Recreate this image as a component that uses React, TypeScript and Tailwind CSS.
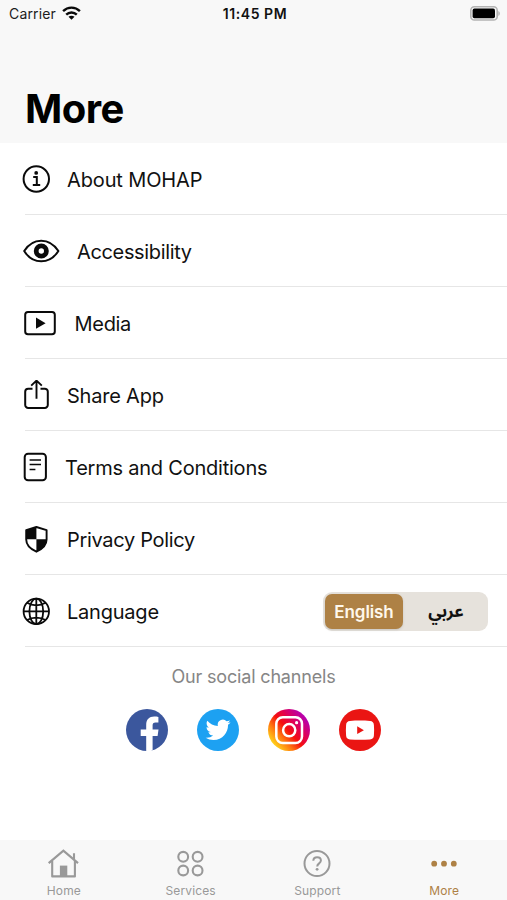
import type { ReactNode } from 'react'

interface MenuItem {
  label: string
  icon: ReactNode
  labelClass: string
}

const menuItems: MenuItem[] = [
  {
    label: 'About MOHAP',
    labelClass: 'ml-[17px] tracking-[-0.13px]',
    icon: (
      <svg width="28" height="30" viewBox="0 0 28 30" fill="none" stroke="#0a0a0a">
        <circle cx="14.3" cy="15" r="12.7" strokeWidth="2" />
        <path d="M11.200 13.1h3.6v7.7M10.800 21h7.400" strokeWidth="2" />
        <circle cx="14.200" cy="8.900" r="1.900" fill="#0a0a0a" stroke="none" />
      </svg>
    ),
  },
  {
    label: 'Accessibility',
    labelClass: 'ml-[17px] tracking-[-0.35px]',
    icon: (
      <svg width="38" height="30" viewBox="0 0 38 30" fill="none" stroke="#0a0a0a">
        <path
          d="M2.200 15C6 9 12 4.700 19.200 4.700S32.500 9 36.400 15C32.500 21.100 26.500 25.300 19.200 25.300S6 21.100 2.200 15Z"
          strokeWidth="2"
          strokeLinejoin="round"
        />
        <circle cx="19.300" cy="15" r="5.100" strokeWidth="4.800" />
      </svg>
    ),
  },
  {
    label: 'Media',
    labelClass: 'ml-[18.5px] tracking-[-0.3px]',
    icon: (
      <svg width="34" height="30" viewBox="0 0 34 30" fill="none" stroke="#0a0a0a">
        <rect x="3.200" y="3.900" width="29.600" height="22.400" rx="2.800" strokeWidth="2" />
        <path d="M14 9.600v11.200l9.600-5.600Z" fill="#0a0a0a" stroke="none" />
      </svg>
    ),
  },
  {
    label: 'Share App',
    labelClass: 'ml-[17px] tracking-[-0.22px]',
    icon: (
      <svg width="28" height="30" viewBox="0 0 28 30" fill="none" stroke="#0a0a0a">
        <path d="M10.500 8.700H6.200a3 3 0 0 0-3 3v13.200a3 3 0 0 0 3 3h16.600a3 3 0 0 0 3-3V11.700a3 3 0 0 0-3-3h-4.300" strokeWidth="2" />
        <path d="M14.500 18.800V1M9.200 5.600l5.300-5 5.300 5" strokeWidth="1.900" />
      </svg>
    ),
  },
  {
    label: 'Terms and Conditions',
    labelClass: 'ml-[17px] tracking-[-0.22px]',
    icon: (
      <svg width="26" height="30" viewBox="0 0 26 30" fill="none" stroke="#0a0a0a">
        <rect x="2.700" y="1.700" width="21.200" height="26.600" rx="3.400" strokeWidth="2" />
        <path d="M7.600 8h11.400M7.600 12.400h11.400M7.600 17.600h5.800" strokeWidth="1.500" />
      </svg>
    ),
  },
  {
    label: 'Privacy Policy',
    labelClass: 'ml-[17px] tracking-[-0.32px]',
    icon: (
      <svg width="28" height="30" viewBox="0 0 28 30" fill="none">
        <path
          d="M14.400 3 24.600 6.200v9.300c0 5.600-4.200 9.500-10.200 12.200C8.400 25 4.200 21.100 4.200 15.500V6.200Z"
          stroke="#0a0a0a"
          strokeWidth="1.900"
          strokeLinejoin="round"
        />
        <path d="M14.400 3v12.200H4.200v-9ZM14.400 15.200h10.200c0 5.900-4.200 9.800-10.200 12.500Z" fill="#0a0a0a" />
      </svg>
    ),
  },
  {
    label: 'Language',
    labelClass: 'ml-[17px] tracking-[-0.22px]',
    icon: (
      <svg width="28" height="30" viewBox="0 0 28 30" fill="none" stroke="#0a0a0a" strokeWidth="1.800">
        <circle cx="14.300" cy="15.400" r="12.700" />
        <ellipse cx="14.300" cy="15.400" rx="6.900" ry="12.700" />
        <path d="M14.300 2.700v25.400M1.600 15.400H27M5 6.800c5.600 3.300 13 3.300 18.600 0M5 24c5.600-3.300 13-3.300 18.600 0" />
      </svg>
    ),
  },
]

const tabs = [
  {
    label: 'Home',
    icon: (
      <svg width="34" height="32" viewBox="0 0 34 32" fill="none" stroke="currentColor">
        <path d="M2.700 15.200 17.400 2.700l14.600 12.500" strokeWidth="2.200" />
        <path d="M6.200 13v15.400h22.700V13M28 11V5.300" strokeWidth="2.100" strokeLinejoin="round" />
        <path d="M13.900 17.600h7.400v10.800h-7.400z" fill="currentColor" stroke="none" />
      </svg>
    ),
  },
  {
    label: 'Services',
    icon: (
      <svg width="34" height="32" viewBox="0 0 34 32" fill="none" stroke="currentColor" strokeWidth="2.100">
        <circle cx="10.200" cy="8.800" r="4.900" />
        <circle cx="24.600" cy="8.800" r="4.900" />
        <circle cx="10.200" cy="22.500" r="4.900" />
        <circle cx="24.600" cy="22.500" r="4.900" />
      </svg>
    ),
  },
  {
    label: 'Support',
    icon: (
      <svg width="34" height="32" viewBox="0 0 34 32" fill="none" stroke="currentColor">
        <circle cx="17" cy="15.500" r="12.500" strokeWidth="2" />
        <path d="M13.300 12.800c.1-2.200 1.600-3.500 3.800-3.500s3.800 1.300 3.800 3.300c0 2.800-3.700 2.700-3.700 5.800" strokeWidth="2" />
        <circle cx="17.100" cy="21.300" r="1.400" fill="currentColor" stroke="none" />
      </svg>
    ),
  },
  {
    label: 'More',
    active: true,
    icon: (
      <svg width="34" height="32" viewBox="0 0 34 32" fill="currentColor">
        <circle cx="7.200" cy="15.700" r="2.900" />
        <circle cx="17" cy="15.700" r="2.900" />
        <circle cx="26.800" cy="15.700" r="2.900" />
      </svg>
    ),
  },
]

function StatusBar() {
  return (
    <div className="flex h-7 items-center pl-[9px] pr-[6px] text-[14px] text-[#1c1c1c]">
      <div className="flex flex-1 items-center gap-[6px] pb-[2px]">
        <span className="tracking-[0.15px]">Carrier</span>
        <svg width="19" height="14" viewBox="0 0 19 14" fill="none" stroke="#0a0a0a" strokeWidth="2.400">
          <path d="M1.100 5.100c4.700-4.600 12.100-4.600 16.800 0M4.200 8.600c3-2.900 7.600-2.900 10.600 0" />
          <path d="M9.500 13.800 6.500 10.800c1.700-1.500 4.300-1.500 6 0Z" fill="#0a0a0a" stroke="none" />
        </svg>
      </div>
      <span className="pb-[2px] font-semibold tracking-[0.55px] text-[#111111]">11:45 PM</span>
      <div className="flex flex-1 justify-end pb-[2px]">
        <svg width="31" height="15" viewBox="0 0 31 15">
          <rect x=".800" y=".800" width="26.400" height="13.200" rx="3.600" fill="#f8f8f8" stroke="#b3b3b3" strokeWidth="1.600" />
          <rect x="2.600" y="2.600" width="22.400" height="9.600" rx="1.800" fill="#000" />
          <path d="M28.300 5v5c2-.8 2-4.200 0-5Z" fill="#b3b3b3" />
        </svg>
      </div>
    </div>
  )
}

function LanguageSwitch() {
  return (
    <div className="ml-auto mr-[19px] flex h-[39px] w-[165px] rounded-[9px] bg-[#e6e2dc] p-[2px] text-[17px] font-semibold">
      <button className="h-[35px] w-[78px] rounded-[7px] bg-[#ae8145] pt-[3px] tracking-[-0.1px] text-[#fff8ec] shadow-sm">
        English
      </button>
      <button
        className="h-[35px] flex-1 pl-[3px] pt-[4px] font-bold text-[#111111]"
        style={{ fontFamily: '"Noto Sans Arabic", "DejaVu Sans", sans-serif' }}
      >
        عربي
      </button>
    </div>
  )
}

function SocialChannels() {
  return (
    <section className="flex flex-col items-center">
      <h2 className="mt-[16px] text-[18px] leading-[28px] tracking-[-0.17px] text-[#868686]">Our social channels</h2>
      <div className="mt-[18px] flex gap-[29px]">
        <svg width="42" height="42" viewBox="0 0 42 42">
          <circle cx="21" cy="21" r="21" fill="#3b579d" />
          <path
            d="M20.200 42V27h-5.500v-6.600h5.500v-4.500c0-5.400 3-8.300 8-8.300 1.600 0 3 .1 4.200.3v5.500h-2.900c-2.200 0-2.900 1.200-2.900 2.900v4.100h5.900l-.9 6.600h-5v14.400Q23.500 42.200 20.200 42Z"
            fill="#fff"
          />
        </svg>
        <svg width="42" height="42" viewBox="0 0 42 42">
          <circle cx="21" cy="21" r="21" fill="#1da1f2" />
          <path
            transform="translate(8.600 8.400) scale(1.040)"
            d="M23.953 4.570a10 10 0 0 1-2.825.775 4.958 4.958 0 0 0 2.163-2.723c-.951.555-2.005.959-3.127 1.184a4.920 4.920 0 0 0-8.384 4.482C7.690 8.095 4.067 6.130 1.640 3.162a4.822 4.822 0 0 0-.666 2.475c0 1.710.870 3.213 2.188 4.096a4.904 4.904 0 0 1-2.228-.616v.060a4.923 4.923 0 0 0 3.946 4.827 4.996 4.996 0 0 1-2.212.085 4.936 4.936 0 0 0 4.604 3.417 9.867 9.867 0 0 1-6.102 2.105c-.390 0-.779-.023-1.170-.067a13.995 13.995 0 0 0 7.557 2.209c9.053 0 13.998-7.496 13.998-13.985 0-.210 0-.420-.015-.630A9.935 9.935 0 0 0 24 4.590Z"
            fill="#fff"
          />
        </svg>
        <svg width="42" height="42" viewBox="0 0 42 42" fill="none">
          <defs>
            <linearGradient id="ig" x1="4" y1="34" x2="36" y2="6" gradientUnits="userSpaceOnUse">
              <stop offset="0" stopColor="#ffd51a" />
              <stop offset=".250" stopColor="#ff7a10" />
              <stop offset=".480" stopColor="#f5100d" />
              <stop offset=".700" stopColor="#e00055" />
              <stop offset="1" stopColor="#b400b4" />
            </linearGradient>
          </defs>
          <circle cx="21" cy="21" r="21" fill="url(#ig)" />
          <rect x="8.300" y="8.300" width="25.700" height="25.700" rx="6.500" stroke="#fff" strokeWidth="2.500" />
          <circle cx="21.200" cy="21.200" r="6.100" stroke="#fff" strokeWidth="2.500" />
          <circle cx="28.600" cy="13.700" r="1.600" fill="#fff" />
        </svg>
        <svg width="42" height="42" viewBox="0 0 42 42">
          <circle cx="21" cy="21" r="21" fill="#ea1513" />
          <path
            d="M11 12c6.500-.6 13.500-.6 20 0 2.600.2 3.700 1.500 3.900 4 .3 3.500.3 7 0 10.500-.2 2.500-1.300 3.700-3.900 3.900-6.500.5-13.500.5-20 0-2.600-.2-3.700-1.400-3.900-3.900-.3-3.500-.3-7 0-10.500.2-2.500 1.300-3.800 3.900-4Z"
            fill="#fff"
          />
          <path d="M18.200 17.300v7.800l6.700-3.900Z" fill="#ea1513" />
        </svg>
      </div>
    </section>
  )
}

export default function App() {
  return (
    <div
      className="flex h-[900px] w-[507px] flex-col overflow-hidden bg-white"
      style={{ fontFamily: 'Inter, "Noto Sans", sans-serif' }}
    >
      <header className="h-[143px] bg-[#f8f8f8]">
        <StatusBar />
        <h1 className="pl-[25px] pt-[56px] text-[40px] font-bold leading-[50px] tracking-[-0.5px] text-black">More</h1>
      </header>

      <ul>
        {menuItems.map((item) => (
          <li key={item.label} className="flex h-[72px] flex-col pl-[22px]">
            <div className="flex flex-1 items-center pt-px">
              {item.icon}
              <span className={`pt-px text-[20px] text-[#111111] ${item.labelClass}`}>{item.label}</span>
              {item.label === 'Language' && <LanguageSwitch />}
            </div>
            <div className="ml-[3px] h-px bg-[#e6e6e6]" />
          </li>
        ))}
      </ul>

      <SocialChannels />

      {/* Tab bar */}
      <nav className="mt-auto grid h-[60px] grid-cols-4 bg-[#f8f8f8]">
        {tabs.map((tab) => (
          <button
            key={tab.label}
            className={`flex flex-col items-center pt-[8px] ${tab.active ? 'text-[#ae8145]' : 'text-[#999999]'}`}
          >
            {tab.icon}
            <span className="mt-[3px] pl-px text-[12px] leading-[16px] tracking-[0.15px]">{tab.label}</span>
          </button>
        ))}
      </nav>
    </div>
  )
}
